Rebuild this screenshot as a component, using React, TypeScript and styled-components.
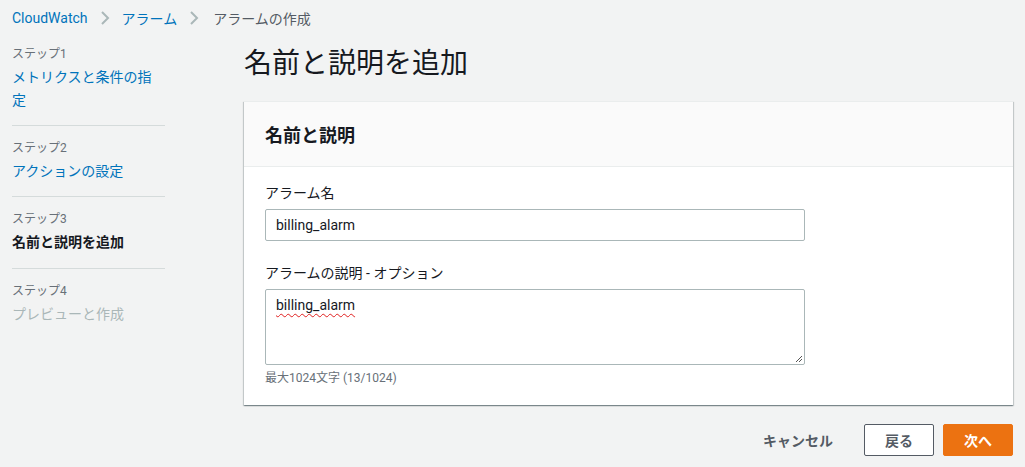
import React from "react";
import styled, { createGlobalStyle } from "styled-components";

const Global = createGlobalStyle`
  html, body { margin: 0; padding: 0; background: #f2f3f3; }
  body {
    font-family: Roboto, "Noto Sans CJK JP", sans-serif;
    color: #16191f;
    font-size: 14px;
  }
  * { box-sizing: border-box; }
`;

const Page = styled.div`
  width: 1025px;
  height: 467px;
  padding: 0 12px;
  overflow: hidden;
`;

const Breadcrumbs = styled.nav`
  display: flex;
  align-items: center;
  height: 36px;
  gap: 12px;
  font-size: 14px;
`;

const Crumb = styled.span<{ $current?: boolean }>`
  color: ${(p) => (p.$current ? "#545b64" : "#0073bb")};
  margin-left: ${(p) => (p.$current ? "2px" : "0")};
`;

const Chevron = () => (
  <svg width="10" height="14" viewBox="0 0 10 14">
    <path d="M2 1l6 6-6 6" fill="none" stroke="#aab7b8" strokeWidth="2" />
  </svg>
);

const Layout = styled.div`
  display: grid;
  grid-template-columns: 153px 1fr;
  column-gap: 79px;
`;

const Steps = styled.ol`
  list-style: none;
  margin: 0;
  padding: 10px 0 0;
`;

const Step = styled.li`
  padding: 0 0 13px;
  margin-bottom: 14px;
  border-bottom: 1px solid #d5dbdb;
  &:last-child {
    border-bottom: none;
  }
  &:nth-child(3) {
    padding-bottom: 14px;
  }
`;

const StepLabel = styled.div`
  font-size: 12px;
  line-height: 16px;
  color: #687078;
  margin-bottom: 4px;
`;

const StepTitle = styled.div<{ $state: "link" | "active" | "disabled" }>`
  font-size: 14px;
  line-height: 23px;
  font-weight: ${(p) => (p.$state === "active" ? 700 : 400)};
  color: ${(p) =>
    p.$state === "link" ? "#0073bb" : p.$state === "active" ? "#16191f" : "#aab7b8"};
`;

const Main = styled.main`
  display: flex;
  flex-direction: column;
`;

const Title = styled.h1`
  margin: 8px 0 0;
  font-size: 28px;
  line-height: 40px;
  font-weight: 400;
  color: #16191f;
`;

const Panel = styled.section`
  margin-top: 17px;
  background: #fff;
  box-shadow: 0 1px 1px 0 rgba(0, 28, 36, 0.3), 1px 1px 1px 0 rgba(0, 28, 36, 0.15),
    -1px 1px 1px 0 rgba(0, 28, 36, 0.15);
  border-top: 1px solid #eaeded;
`;

const PanelHeader = styled.header`
  background: #fafafa;
  border-bottom: 1px solid #eaeded;
  height: 65px;
  display: flex;
  align-items: center;
  padding: 0 21px;
  font-size: 18px;
  font-weight: 700;
`;

const PanelBody = styled.div`
  padding: 16px 21px 19px;
  display: flex;
  flex-direction: column;
`;

const Field = styled.div`
  display: flex;
  flex-direction: column;
  width: 540px;
  & + & {
    margin-top: 22px;
  }
`;

const Label = styled.label`
  font-size: 14px;
  line-height: 20px;
  margin-bottom: 6px;
  color: #16191f;
`;

const Input = styled.div`
  height: 32px;
  border: 1px solid #aab7b8;
  border-radius: 2px;
  padding: 0 10px;
  display: flex;
  align-items: center;
  font-size: 14px;
  background: #fff;
`;

const TextArea = styled.div`
  position: relative;
  height: 76px;
  border: 1px solid #aab7b8;
  border-radius: 2px;
  padding: 5px 10px;
  font-size: 14px;
  line-height: 20px;
  background: #fff;
`;

const Misspelled = styled.span`
  text-decoration: underline wavy #e02020;
  text-decoration-thickness: 1px;
  text-underline-offset: 3px;
`;

const Grip = styled.svg`
  position: absolute;
  right: 1px;
  bottom: 1px;
`;

const Help = styled.div`
  font-size: 12px;
  line-height: 16px;
  color: #687078;
  margin-top: 5px;
`;

const Actions = styled.div`
  display: flex;
  justify-content: flex-end;
  align-items: center;
  gap: 9px;
  margin-top: 19px;
`;

const Button = styled.button<{ $variant: "link" | "normal" | "primary" }>`
  font-family: inherit;
  font-size: 14px;
  font-weight: 700;
  height: 32px;
  padding: 0;
  border-radius: 2px;
  cursor: pointer;
  border: 1px solid
    ${(p) => (p.$variant === "normal" ? "#545b64" : p.$variant === "primary" ? "#ec7211" : "transparent")};
  background: ${(p) => (p.$variant === "primary" ? "#ec7211" : p.$variant === "normal" ? "#fff" : "transparent")};
  color: ${(p) => (p.$variant === "primary" ? "#fff" : "#545b64")};
  width: ${(p) => (p.$variant === "link" ? "auto" : "70px")};
  margin-right: ${(p) => (p.$variant === "link" ? "21px" : "0")};
`;

const steps: { n: number; title: string; state: "link" | "active" | "disabled" }[] = [
  { n: 1, title: "メトリクスと条件の指定", state: "link" },
  { n: 2, title: "アクションの設定", state: "link" },
  { n: 3, title: "名前と説明を追加", state: "active" },
  { n: 4, title: "プレビューと作成", state: "disabled" },
];

export default function App() {
  return (
    <Page>
      <Global />
      <Breadcrumbs>
        <Crumb>CloudWatch</Crumb>
        <Chevron />
        <Crumb>アラーム</Crumb>
        <Chevron />
        <Crumb $current>アラームの作成</Crumb>
      </Breadcrumbs>
      <Layout>
        <Steps>
          {steps.map((s) => (
            <Step key={s.n}>
              <StepLabel>ステップ{s.n}</StepLabel>
              <StepTitle $state={s.state}>{s.title}</StepTitle>
            </Step>
          ))}
        </Steps>
        <Main>
          <Title>名前と説明を追加</Title>
          <Panel>
            <PanelHeader>名前と説明</PanelHeader>
            <PanelBody>
              <Field>
                <Label>アラーム名</Label>
                <Input>billing_alarm</Input>
              </Field>
              <Field>
                <Label>アラームの説明 - オプション</Label>
                <TextArea>
                  <Misspelled>billing_alarm</Misspelled>
                  <Grip width="10" height="10" viewBox="0 0 10 10">
                    <path d="M9 3L3 9M9 6L6 9" stroke="#555" strokeWidth="1" fill="none" />
                  </Grip>
                </TextArea>
                <Help>最大1024文字 (13/1024)</Help>
              </Field>
            </PanelBody>
          </Panel>
          <Actions>
            <Button $variant="link">キャンセル</Button>
            <Button $variant="normal">戻る</Button>
            <Button $variant="primary">次へ</Button>
          </Actions>
        </Main>
      </Layout>
    </Page>
  );
}
